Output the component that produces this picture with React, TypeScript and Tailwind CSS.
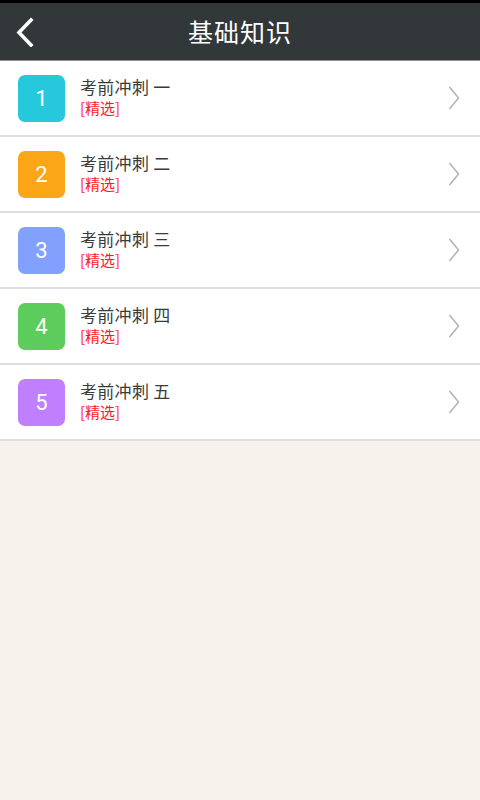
const items = [
  { n: "1", label: "考前冲刺 一", color: "bg-[#26c9dc]" },
  { n: "2", label: "考前冲刺 二", color: "bg-[#fba616]" },
  { n: "3", label: "考前冲刺 三", color: "bg-[#82a1ff]" },
  { n: "4", label: "考前冲刺 四", color: "bg-[#5ccd5c]" },
  { n: "5", label: "考前冲刺 五", color: "bg-[#bf7fff]" },
];

const font = { fontFamily: '"Noto Sans CJK SC", "Noto Sans", sans-serif' };

export default function App() {
  return (
    <div className="w-[480px] h-[800px] bg-[#f6f3ec] flex flex-col" style={font}>
      <div className="h-[3px] bg-black" />
      <header className="relative h-[57px] bg-[#32373a] flex items-center justify-center">
        <button className="absolute left-[12px] top-[12px] w-[26px] h-[34px] flex items-center justify-center" aria-label="back">
          <svg width="20" height="30" viewBox="0 0 20 30">
            <path d="M16 3 L4 15.5 L16 28" fill="none" stroke="#fff" strokeWidth="3.6" strokeLinecap="square" />
          </svg>
        </button>
        <h1 className="text-white text-[25px] leading-none tracking-[1px]">基础知识</h1>
      </header>
      <div className="h-px bg-[#8c9093]" />

      <ul className="bg-white">
        {items.map((item) => (
          <li
            key={item.n}
            className="h-[76px] flex items-center pl-[18px] pr-[20px] border-b-2 border-[#dedede]"
          >
            <div
              className={`w-[47px] h-[47px] rounded-[7px] ${item.color} flex items-center justify-center text-white text-[22px]`}
              style={{ fontFamily: "Roboto, sans-serif" }}
            >
              {item.n}
            </div>
            <div className="ml-[15px] flex-1 flex flex-col gap-[2px] -mt-[3px]">
              <span className="text-[17px] leading-[20px] text-[#3a3a3a] tracking-[0.3px]">{item.label}</span>
              <span className="text-[15px] leading-[18px] text-[#ff1a1a]">[精选]</span>
            </div>
            <svg width="12" height="24" viewBox="0 0 12 24">
              <path d="M1.5 1 L10.5 12 L1.5 23" fill="none" stroke="#b4b4b4" strokeWidth="1.6" />
            </svg>
          </li>
        ))}
      </ul>
    </div>
  );
}
